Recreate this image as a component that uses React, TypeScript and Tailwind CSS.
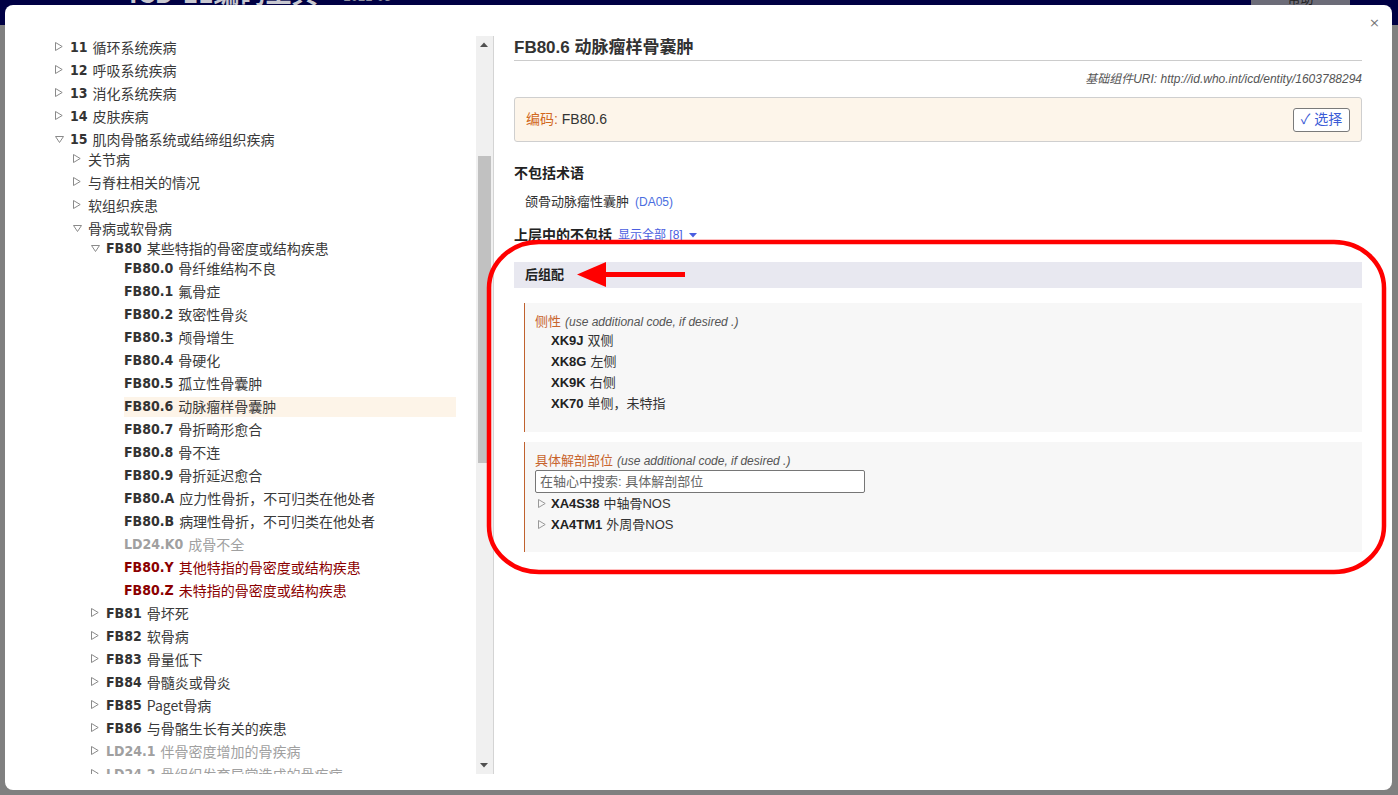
import React from "react";

type TNode = {
  code?: string;
  name: string;
  state: "open" | "closed" | "leaf";
  tone?: "gray" | "red";
  selected?: boolean;
  children?: TNode[];
};

const leaf = (code: string, name: string, extra: Partial<TNode> = {}): TNode => ({ code, name, state: "leaf", ...extra });
const closed = (code: string | undefined, name: string, extra: Partial<TNode> = {}): TNode => ({ code, name, state: "closed", ...extra });

const tree: TNode[] = [
  closed("11", "循环系统疾病"),
  closed("12", "呼吸系统疾病"),
  closed("13", "消化系统疾病"),
  closed("14", "皮肤疾病"),
  {
    code: "15",
    name: "肌肉骨骼系统或结缔组织疾病",
    state: "open",
    children: [
      closed(undefined, "关节病"),
      closed(undefined, "与脊柱相关的情况"),
      closed(undefined, "软组织疾患"),
      {
        name: "骨病或软骨病",
        state: "open",
        children: [
          {
            code: "FB80",
            name: "某些特指的骨密度或结构疾患",
            state: "open",
            children: [
              leaf("FB80.0", "骨纤维结构不良"),
              leaf("FB80.1", "氟骨症"),
              leaf("FB80.2", "致密性骨炎"),
              leaf("FB80.3", "颅骨增生"),
              leaf("FB80.4", "骨硬化"),
              leaf("FB80.5", "孤立性骨囊肿"),
              leaf("FB80.6", "动脉瘤样骨囊肿", { selected: true }),
              leaf("FB80.7", "骨折畸形愈合"),
              leaf("FB80.8", "骨不连"),
              leaf("FB80.9", "骨折延迟愈合"),
              leaf("FB80.A", "应力性骨折，不可归类在他处者"),
              leaf("FB80.B", "病理性骨折，不可归类在他处者"),
              leaf("LD24.K0", "成骨不全", { tone: "gray" }),
              leaf("FB80.Y", "其他特指的骨密度或结构疾患", { tone: "red" }),
              leaf("FB80.Z", "未特指的骨密度或结构疾患", { tone: "red" }),
            ],
          },
          closed("FB81", "骨坏死"),
          closed("FB82", "软骨病"),
          closed("FB83", "骨量低下"),
          closed("FB84", "骨髓炎或骨炎"),
          closed("FB85", "Paget骨病"),
          closed("FB86", "与骨骼生长有关的疾患"),
          closed("LD24.1", "伴骨密度增加的骨疾病", { tone: "gray" }),
          closed("LD24.2", "骨组织发育异常造成的骨疾病", { tone: "gray" }),
        ],
      },
    ],
  },
];

function TriRight({ color = "#8a8a8a" }: { color?: string }) {
  return (
    <svg width="8" height="9" viewBox="0 0 8 9" className="block">
      <polygon points="0.5,0.5 7.2,4.5 0.5,8.5" fill="none" stroke={color} strokeWidth="1" />
    </svg>
  );
}

function TriDown({ color = "#8a8a8a" }: { color?: string }) {
  return (
    <svg width="9" height="7" viewBox="0 0 9 7" className="block">
      <polygon points="0.5,0.5 8.5,0.5 4.5,6.5" fill="none" stroke={color} strokeWidth="1" />
    </svg>
  );
}

function Row({ node }: { node: TNode }) {
  const codeColor =
    node.tone === "gray" ? "text-[#a0a0a0]" : node.tone === "red" ? "text-[#8b0000]" : "text-[#333333]";
  const nameColor =
    node.tone === "gray" ? "text-[#a0a0a0]" : node.tone === "red" ? "text-[#8b0000]" : "text-[#3a3a3a]";
  return (
    <div className="flex h-[23px] items-center">
      <div className="flex h-full w-[15px] shrink-0 items-start pt-[6px]">
        {node.state === "closed" && <TriRight />}
        {node.state === "open" && (
          <div className="pt-[2px]">
            <TriDown />
          </div>
        )}
      </div>
      <div
        className={`flex h-[20px] flex-1 items-center whitespace-nowrap ${node.selected ? "bg-[#fdf4e8]" : ""}`}
      >
        {node.code && (
          <span className={`mr-[5px] font-['DejaVu_Sans_Condensed','DejaVu_Sans',sans-serif] text-[14px] font-bold ${codeColor}`}>
            {node.code}
          </span>
        )}
        <span className={`font-['Noto_Sans_CJK_SC',sans-serif] text-[14px] ${nameColor}`}>{node.name}</span>
      </div>
    </div>
  );
}

function TreeList({ nodes, nested }: { nodes: TNode[]; nested?: boolean }) {
  return (
    <ul className={nested ? "-mt-[3px] pl-[18px]" : "pl-[50px] pr-[20px]"}>
      {nodes.map((n, i) => (
        <li key={i}>
          <Row node={n} />
          {n.children && <TreeList nodes={n.children} nested />}
        </li>
      ))}
    </ul>
  );
}

function Scrollbar() {
  return (
    <div className="flex h-full w-[17px] shrink-0 flex-col bg-[#f0f0f0]">
      <div className="flex h-[17px] items-center justify-center pr-px">
        <svg width="8" height="5" viewBox="0 0 8 5">
          <polygon points="0,5 8,5 4,0.5" fill="#505050" />
        </svg>
      </div>
      <div className="h-[103px]" />
      <div className="ml-[2px] h-[307px] w-[13px] bg-[#c1c1c1]" />
      <div className="flex-1" />
      <div className="flex h-[17px] items-center justify-center pr-px">
        <svg width="8" height="5" viewBox="0 0 8 5">
          <polygon points="0,0 8,0 4,4.5" fill="#505050" />
        </svg>
      </div>
    </div>
  );
}

function PostItem({ code, name, tri }: { code: string; name: string; tri?: boolean }) {
  return (
    <div className="flex h-[21px] items-center">
      <div className="flex w-[16px] shrink-0 pl-[3px]">{tri && <TriRight color="#999" />}</div>
      <span className="mr-[4px] text-[13px] font-bold text-[#222]">{code}</span>
      <span className="text-[13px] text-[#333]">{name}</span>
    </div>
  );
}

function RightPane() {
  return (
    <div className="flex-1 pl-[20px] pr-[30px] font-['Liberation_Sans','Noto_Sans_CJK_SC',sans-serif] text-[#333]">
      <div className="h-[25px] border-b border-[#cccccc] text-[17px] font-bold leading-[24px] text-[#333]">
        FB80.6 动脉瘤样骨囊肿
      </div>
      <div className="mt-[10px] text-right text-[12px] italic leading-[16px] text-[#555]">
        基础组件URI: http://id.who.int/icd/entity/1603788294
      </div>
      <div className="mt-[10px] flex h-[45px] items-center justify-between rounded-[3px] border border-[#cfcfcf] bg-[#fdf5ea] px-[11px]">
        <div className="text-[14px]">
          <span className="text-[#d2691e]">编码: </span>
          <span className="text-[#333]">FB80.6</span>
        </div>
        <div className="flex h-[24px] w-[57px] items-center justify-center rounded-[3px] border border-[#7a7a7a] bg-white text-[14px] text-[#3b5bd6]">
          ✓ 选择
        </div>
      </div>
      <div className="mt-[21px] text-[14px] font-bold leading-[20px] text-[#222]">不包括术语</div>
      <div className="mt-[9px] pl-[11px] text-[13px] leading-[20px]">
        <span className="text-[#333]">颌骨动脉瘤性囊肿</span>
        <span className="ml-[6px] text-[12px] text-[#4a6ee0]">(DA05)</span>
      </div>
      <div className="mt-[13px] flex items-center leading-[20px]">
        <span className="text-[14px] font-bold text-[#222]">上层中的不包括</span>
        <span className="ml-[6px] text-[12px] text-[#4a5ee0]">显示全部 [8]</span>
        <svg width="8" height="6" viewBox="0 0 8 6" className="ml-[6px]">
          <polygon points="0,1 8,1 4,5.5" fill="#4a5ee0" />
        </svg>
      </div>
      <div className="mt-[17px] flex h-[26px] items-center bg-[#e8e8f0] pl-[11px] text-[13px] font-bold text-[#222]">
        后组配
      </div>
      <div className="ml-[10px] mt-[15px] border-l border-[#c0622f] bg-[#f7f7f7] pb-[18px] pl-[10px] pt-[10px]">
        <div className="flex h-[17px] items-center text-[13px]">
          <span className="text-[#c8642d]">侧性</span>
          <span className="ml-[4px] text-[12px] italic text-[#555]">(use additional code, if desired .)</span>
        </div>
        <PostItem code="XK9J" name="双侧" />
        <PostItem code="XK8G" name="左侧" />
        <PostItem code="XK9K" name="右侧" />
        <PostItem code="XK70" name="单侧，未特指" />
      </div>
      <div className="ml-[10px] mt-[10px] border-l border-[#c0622f] bg-[#f7f7f7] pb-[17px] pl-[10px] pt-[10px]">
        <div className="flex h-[18px] items-center text-[13px]">
          <span className="text-[#c8642d]">具体解剖部位</span>
          <span className="ml-[4px] text-[12px] italic text-[#555]">(use additional code, if desired .)</span>
        </div>
        <input
          readOnly
          placeholder="在轴心中搜索: 具体解剖部位"
          className="block h-[23px] w-[330px] rounded-[2px] border border-[#767676] bg-white px-[4px] font-['Liberation_Sans','Noto_Sans_CJK_SC',sans-serif] text-[13px] outline-none placeholder:text-[#666]"
        />
        <PostItem code="XA4S38" name="中轴骨NOS" tri />
        <PostItem code="XA4TM1" name="外周骨NOS" tri />
      </div>
    </div>
  );
}

export default function App() {
  return (
    <div className="relative h-[795px] w-[1398px] overflow-hidden bg-[#808080]">
      <header className="flex h-[25px] items-start overflow-hidden bg-[#000044]">
        <div className="-mt-[23px] flex w-full items-start">
          <div className="ml-[129px] font-['Noto_Sans_CJK_SC',sans-serif] text-[26px] font-bold leading-[30px] text-[#c8c8d0]">
            ICD-11编码工具
          </div>
          <div className="ml-[26px] mt-[10px] font-['Liberation_Sans',sans-serif] text-[13px] leading-[20px] text-[#9090a0]">
            2021-05
          </div>
          <div className="flex-1" />
          <div className="mr-[48px] flex h-[28px] w-[99px] items-end justify-center bg-[#6c6c78] font-['Noto_Sans_CJK_SC',sans-serif] text-[13px] leading-[14px] text-[#222]">
            帮助
          </div>
        </div>
      </header>

      <div className="absolute left-[5px] top-[5px] h-[785px] w-[1387px] overflow-hidden rounded-[8px] bg-white">
        <div className="absolute right-[12px] top-[10px] font-['DejaVu_Sans',sans-serif] text-[13px] leading-[16px] text-[#777]">
          ×
        </div>
        <div className="flex pt-[31px]">
          <div className="flex h-[738px] w-[489px] shrink-0 border-r border-[#d4d4d4]">
            <div className="h-full flex-1 overflow-hidden">
              <TreeList nodes={tree} />
            </div>
            <Scrollbar />
          </div>
          <RightPane />
        </div>
      </div>

      <svg className="pointer-events-none absolute left-0 top-0" width="1398" height="795" viewBox="0 0 1398 795">
        <rect x="489" y="242" width="895" height="330" rx="50" ry="46" fill="none" stroke="#ff0000" strokeWidth="4.5" />
        <rect x="603" y="272" width="82" height="5" fill="#ff0000" />
        <polygon points="577,274.5 606,262 606,287" fill="#ff0000" />
      </svg>
    </div>
  );
}
